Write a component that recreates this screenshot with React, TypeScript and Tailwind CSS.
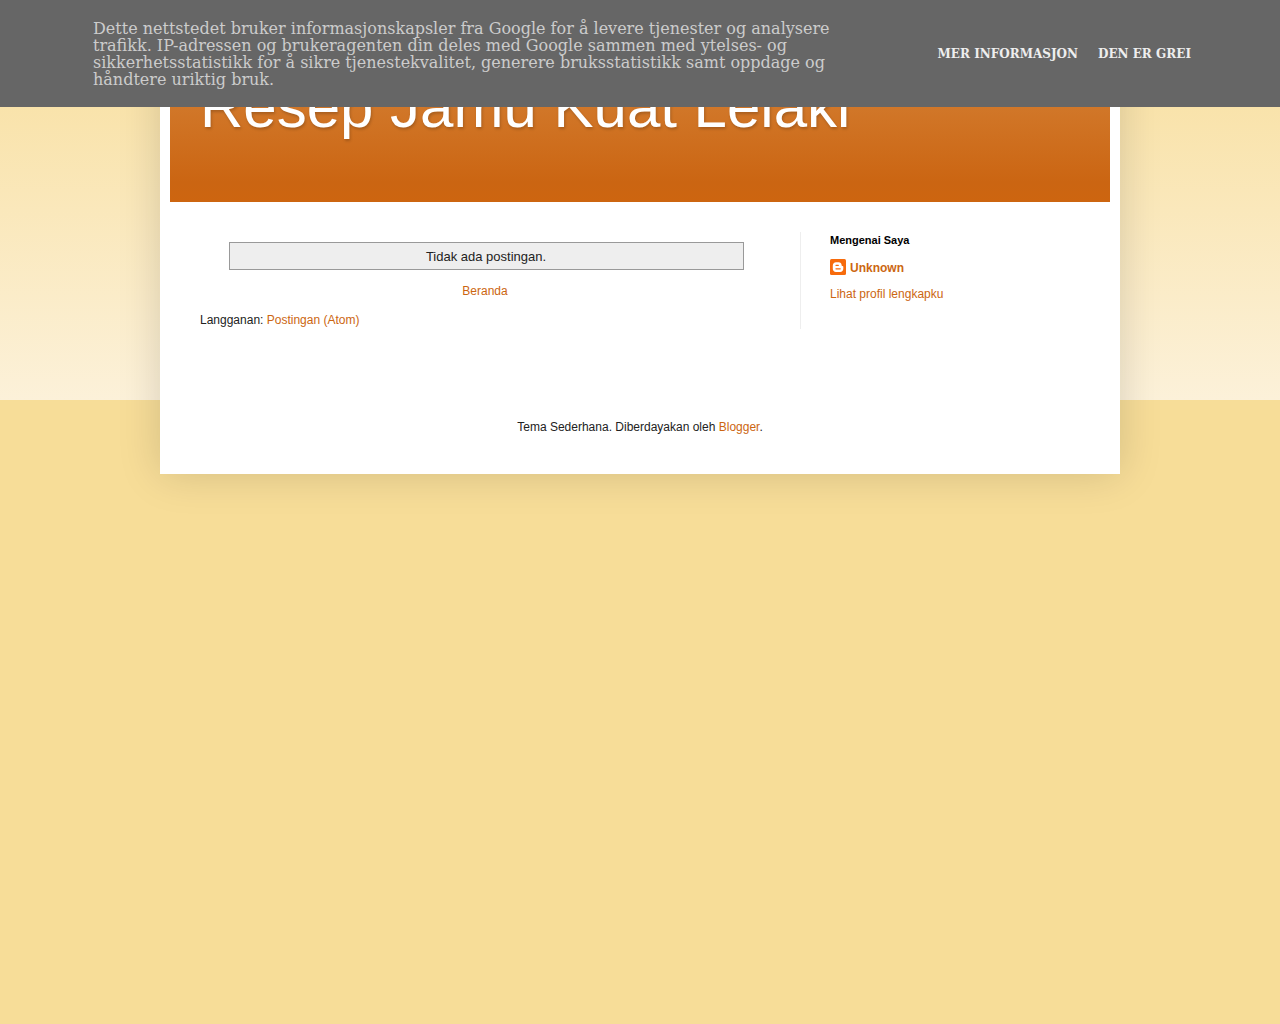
const linkClass = 'text-[#cc6611] no-underline hover:underline';

const CookieNotice = () => {
  const actions = [
    { label: 'Mer informasjon', href: '#info' },
    { label: 'Den er grei', href: '#ok' },
  ];

  return (
    <div className="fixed inset-x-0 top-0 z-10 bg-[#666666] font-['DejaVu_Serif',serif]">
      <div className="flex items-center justify-between pt-5 pb-[19px] pl-[93px] pr-[79px]">
        <p className="max-w-[750px] text-[16px] leading-[17px] text-[#cccccc]">
          Dette nettstedet bruker informasjonskapsler fra Google for å levere tjenester og analysere
          trafikk. IP-adressen og brukeragenten din deles med Google sammen med ytelses- og
          sikkerhetsstatistikk for å sikre tjenestekvalitet, generere bruksstatistikk samt oppdage og
          håndtere uriktig bruk.
        </p>
        <div className="flex shrink-0">
          {actions.map(({ label, href }) => (
            <a
              key={label}
              href={href}
              className="px-2.5 text-[12px] leading-[17px] font-bold whitespace-nowrap text-[#eeeeee] uppercase"
            >
              {label}
            </a>
          ))}
        </div>
      </div>
    </div>
  );
};

const BloggerIcon = () => (
  <svg viewBox="0 0 16 16" className="h-4 w-4" aria-hidden="true">
    <rect width="16" height="16" rx="1.5" fill="#f76b0c" />
    <path
      fill="#fff"
      d="M6 3.200h2.700c1.700 0 2.900 1.200 2.900 2.700 0 .8.300 1.100.9 1.100.500 0 .8.300.8.800v2c0 1.900-1.300 3.200-3.200 3.200H6C4.100 13 2.800 11.700 2.800 9.800V6.400C2.800 4.500 4.100 3.200 6 3.200z"
    />
    <path stroke="#f76b0c" strokeWidth="1.3" strokeLinecap="round" d="M6 6.300h2.300M6 9.800h4.200" />
  </svg>
);

const Sidebar = () => (
  <aside className="w-[310px] border-l border-[#eeeeee] pl-[29px]">
    <h2 className="text-[11px] leading-4 font-bold text-black">Mengenai Saya</h2>
    <a href="#profile" className={`mt-[11px] flex items-start gap-1 font-bold leading-[18px] ${linkClass}`}>
      <BloggerIcon />
      Unknown
    </a>
    <a href="#profile" className={`mt-[9px] inline-block ${linkClass}`}>
      Lihat profil lengkapku
    </a>
  </aside>
);

const App = () => (
  <div className="min-h-screen bg-[#f7dd98] bg-[linear-gradient(to_bottom,#f7dd98,#f9e3ab_107px,#fcf1d9)] bg-[length:100%_400px] bg-no-repeat font-['Liberation_Sans',Arial,sans-serif] text-[12px] leading-[17px] text-[#222222]">
    <CookieNotice />

    <div className="mx-auto max-w-[960px] bg-white px-2.5 pt-10 pb-[38px] shadow-[0_0_40px_rgba(0,0,0,0.15)]">
      <header className="bg-[linear-gradient(to_bottom,#d68240,#d17729_41%,#cb6512_88%,#cd6510)] px-[30px] pt-8 pb-[61px]">
        <h1 className="text-[60px] leading-[69px] text-white [text-shadow:1px_2px_3px_rgba(0,0,0,0.2)]">
          Resep Jamu Kuat Lelaki
        </h1>
      </header>

      <div className="flex pt-[30px]">
        <main className="min-w-0 flex-1 px-[30px] pt-2.5">
          <div className="mx-[5%] box-content w-[90%] border border-[#999999] bg-[#eeeeee] pt-1.5 pb-1 text-center text-[13px] leading-4">
            Tidak ada postingan.
          </div>
          <div className="mt-[13px] text-center">
            <a href="#home" className={linkClass}>
              Beranda
            </a>
          </div>
          <div className="mt-3">
            Langganan:{' '}
            <a href="#feed" className={linkClass}>
              Postingan (Atom)
            </a>
          </div>
        </main>
        <Sidebar />
      </div>

      <footer className="pt-[90px] text-center">
        Tema Sederhana. Diberdayakan oleh{' '}
        <a href="#blogger" className={linkClass}>
          Blogger
        </a>
        .
      </footer>
    </div>
  </div>
);

export default App;
